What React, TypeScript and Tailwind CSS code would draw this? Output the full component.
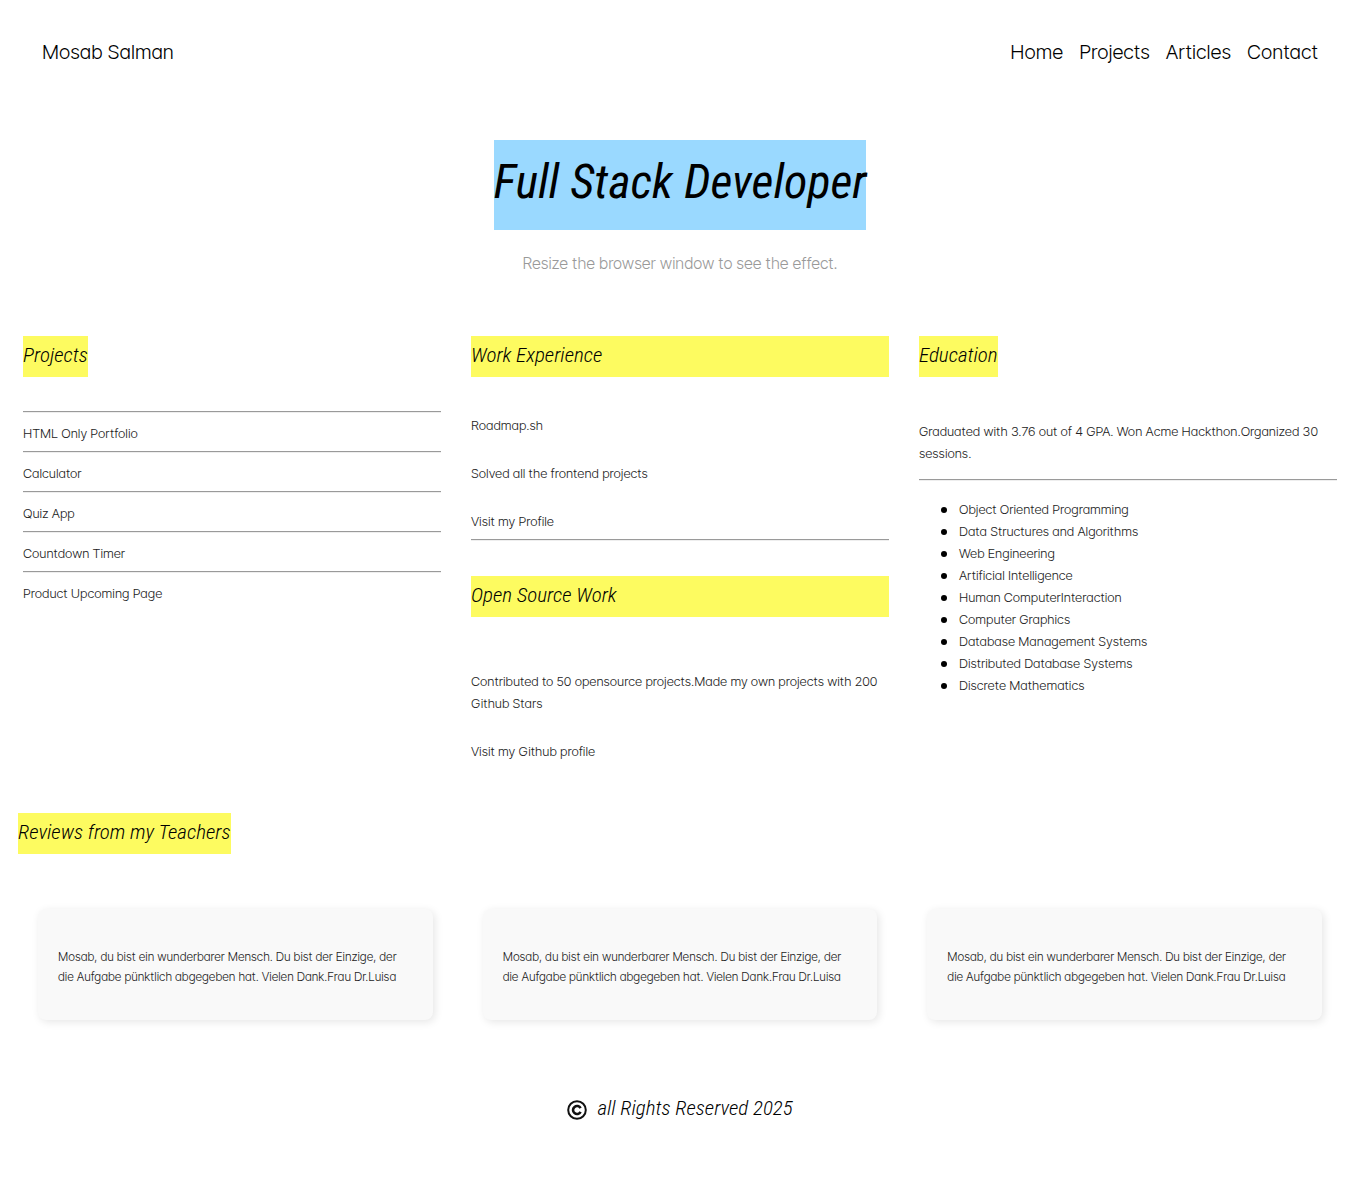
import type { ReactNode } from 'react';

const script = "font-['Roboto_Condensed',cursive] italic text-black";

const projects = ['HTML Only Portfolio', 'Calculator', 'Quiz App', 'Countdown Timer', 'Product Upcoming Page'];
const courses = [
  'Object Oriented Programming',
  'Data Structures and Algorithms',
  'Web Engineering',
  'Artificial Intelligence',
  'Human ComputerInteraction',
  'Computer Graphics',
  'Database Management Systems',
  'Distributed Database Systems',
  'Discrete Mathematics',
];
const review =
  'Mosab, du bist ein wunderbarer Mensch. Du bist der Einzige, der die Aufgabe pünktlich abgegeben hat. Vielen Dank.Frau Dr.Luisa';

function Heading({ children, fit = false }: { children: ReactNode; fit?: boolean }) {
  return (
    <h2 className={`${script} bg-[#fdfb60] text-[21px] leading-[38px] pb-[3px] ${fit ? 'w-fit' : ''}`}>{children}</h2>
  );
}

function Rule() {
  return <hr className="h-0.5 border-y border-t-[#9a9a9a] border-b-[#eeeeee]" />;
}

export default function App() {
  return (
    <div className="bg-white pb-12 font-['Inter_Tight','Roboto',sans-serif] text-[13px] leading-[22px] font-light text-[#222] [font-feature-settings:'cv11']">
      <header className="flex items-center justify-between px-[42px] pt-8 text-[20px] leading-10 text-black">
        <a href="#home">Mosab Salman</a>
        <nav className="flex gap-4">
          <a href="#home">Home</a>
          <a href="#projects">Projects</a>
          <a href="#articles">Articles</a>
          <a href="#contact">Contact</a>
        </nav>
      </header>

      <section className="flex flex-col items-center pt-[68px]">
        <h1 className={`${script} bg-[#9ad9ff] text-[48px] leading-[84px] font-normal pb-1.5`}>Full Stack Developer</h1>
        <p className="pt-[22px] text-[16px] text-[#999]">Resize the browser window to see the effect.</p>
      </section>

      <main className="grid grid-cols-3 gap-[30px] px-[23px] pt-[62px]">
        <section id="projects">
          <Heading fit>Projects</Heading>
          <ul className="pt-[34px]">
            {projects.map((name) => (
              <li key={name}>
                <Rule />
                <a href="#projects" className="block pt-[9px] pb-[7px]">{name}</a>
              </li>
            ))}
          </ul>
        </section>

        <section id="articles">
          <Heading>Work Experience</Heading>
          <div className="flex flex-col gap-[26px] pt-[37px] pb-[7px]">
            <p>Roadmap.sh</p>
            <p>Solved all the frontend projects</p>
            <a href="#profile">Visit my Profile</a>
          </div>
          <Rule />
          <div className="pt-[35px]">
            <Heading>Open Source Work</Heading>
            <div className="flex flex-col gap-[26px] pt-[53px]">
              <p>Contributed to 50 opensource projects.Made my own projects with 200 Github Stars</p>
              <a href="#github">Visit my Github profile</a>
            </div>
          </div>
        </section>

        <section>
          <Heading fit>Education</Heading>
          <p className="pt-[43px] pb-[15px]">
            Graduated with 3.76 out of 4 GPA. Won Acme Hackthon.Organized 30 sessions.
          </p>
          <Rule />
          <ul className="pt-[17px] pl-10">
            {courses.map((name) => (
              <li
                key={name}
                className="before:mr-3 before:-ml-[18px] before:inline-block before:size-1.5 before:rounded-full before:bg-black before:align-middle"
              >
                {name}
              </li>
            ))}
          </ul>
        </section>
      </main>

      <section className="pt-[51px]">
        <div className="px-[18px]">
          <Heading fit>Reviews from my Teachers</Heading>
        </div>
        <div className="grid grid-cols-3 gap-[50px] px-[38px] pt-[55px]">
          {[1, 2, 3].map((n) => (
            <blockquote
              key={n}
              className="rounded-lg bg-[#f9f9f9] px-5 pt-[38px] pb-[33px] text-[12px] leading-5 shadow-[2px_2px_8px_rgba(0,0,0,0.1)]"
            >
              {review}
            </blockquote>
          ))}
        </div>
      </section>

      <footer id="contact" className="flex items-center justify-center gap-2.5 pt-[69px]">
        <svg viewBox="0 0 20 20" className="size-5" fill="none" stroke="#111" aria-hidden="true">
          <circle cx="10" cy="10" r="8.8" strokeWidth="2" />
          <path d="M13.6 8.2a4 4 0 1 0 0 3.6" strokeWidth="2.6" />
        </svg>
        <p className={`${script} text-[21px] leading-[38px] pb-[3px]`}>all Rights Reserved 2025</p>
      </footer>
    </div>
  );
}
